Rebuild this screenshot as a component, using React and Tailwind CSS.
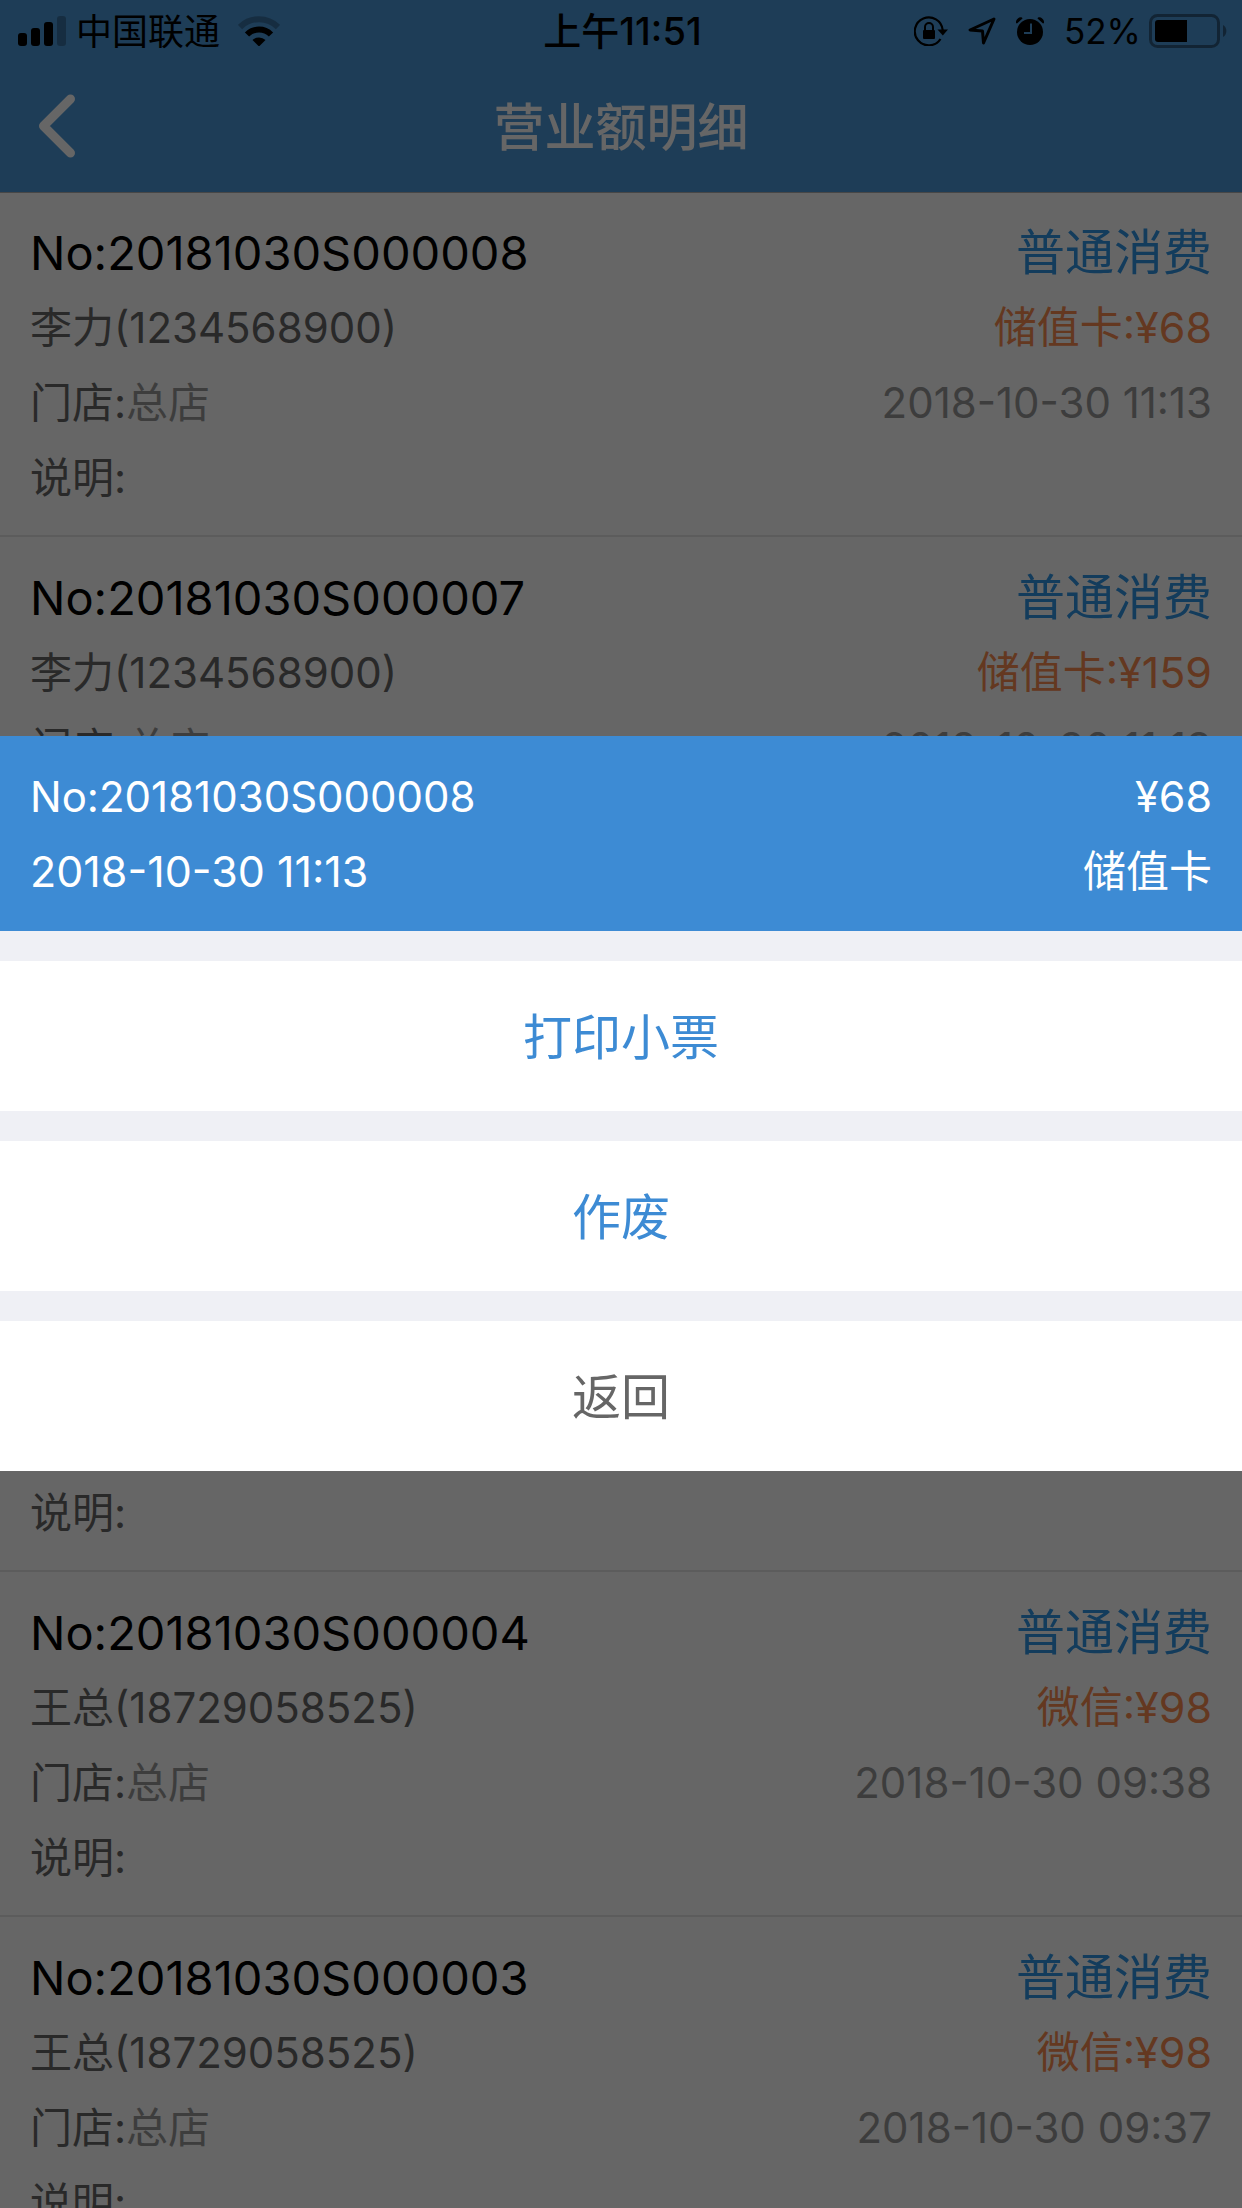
import React from 'react';

const orders = [
    { no: '20181030S000008', type: '普通消费', member: '李力(1234568900)', pay: '储值卡', amount: 68, store: '总店', time: '2018-10-30 11:13' },
    { no: '20181030S000007', type: '普通消费', member: '李力(1234568900)', pay: '储值卡', amount: 159, store: '总店', time: '2018-10-30 11:13' },
    { no: '20181030S000006', type: '普通消费', member: '李力(1234568900)', pay: '储值卡', amount: 98, store: '总店', time: '2018-10-30 10:02' },
    { no: '20181030S000005', type: '普通消费', member: '王总(18729058525)', pay: '微信', amount: 98, store: '总店', time: '2018-10-30 09:40' },
    { no: '20181030S000004', type: '普通消费', member: '王总(18729058525)', pay: '微信', amount: 98, store: '总店', time: '2018-10-30 09:38' },
    { no: '20181030S000003', type: '普通消费', member: '王总(18729058525)', pay: '微信', amount: 98, store: '总店', time: '2018-10-30 09:37' },
];

const SignalIcon = () => (
    <svg className="w-12 h-[30px]" viewBox="0 0 48 30" aria-hidden="true">
        <rect x="0" y="17" width="9" height="13" rx="3" />
        <rect x="13" y="12" width="9" height="18" rx="3" />
        <rect x="26" y="6" width="9" height="24" rx="3" />
        <rect x="39" y="0" width="9" height="30" rx="3" opacity="0.25" />
    </svg>
);

const WifiIcon = () => (
    <svg className="w-[42px] h-[30px]" viewBox="0 0 42 30" aria-hidden="true">
        <path d="M2 11 A27 27 0 0 1 40 11" fill="none" stroke="black" strokeWidth="6" opacity="0.25" />
        <path d="M9 18.5 A17 17 0 0 1 33 18.5" fill="none" stroke="black" strokeWidth="6" />
        <path d="M14.5 24 A9.5 9.5 0 0 1 27.5 24 L21 30.5 Z" />
    </svg>
);

const RotationLockIcon = () => (
    <svg className="w-[34px] h-[30px]" viewBox="0 0 34 30" aria-hidden="true">
        <path d="M26.5 23 A14 14 0 1 1 28.7 14" fill="none" stroke="black" strokeWidth="2.2" />
        <path d="M23.5 13.5 H34 L28.8 19.5 Z" />
        <rect x="9" y="14" width="12" height="9" rx="1" />
        <path d="M11 15 V11 A4 4 0 0 1 19 11 V15" fill="none" stroke="black" strokeWidth="2" />
    </svg>
);

const LocationIcon = () => (
    <svg className="w-7 h-7" viewBox="0 0 28 28" aria-hidden="true">
        <path d="M26 2 L2 13 L14.5 14 L15.5 26 Z" fill="none" stroke="black" strokeWidth="3" strokeLinejoin="round" />
    </svg>
);

const AlarmIcon = () => (
    <svg className="w-7 h-7" viewBox="0 0 28 28" aria-hidden="true">
        <circle cx="14" cy="15" r="13" />
        <path d="M0 6 A5 5 0 0 1 6 0.5 L6.5 1.5 L1 6.5 Z M28 6 A5 5 0 0 0 22 0.5 L21.5 1.5 L27 6.5 Z" />
        <path d="M15 6.5 V16 H8" fill="none" stroke="#4b98d9" strokeWidth="2" />
    </svg>
);

const BatteryIcon = () => (
    <svg className="w-[78px] h-[34px]" viewBox="0 0 78 34" aria-hidden="true">
        <rect x="1.5" y="1.5" width="68" height="31" rx="7" fill="none" stroke="black" strokeWidth="3" opacity="0.4" />
        <path d="M74 11 A7 7 0 0 1 74 23 Z" opacity="0.4" />
        <path d="M9 6 H38 V28 H9 A3 3 0 0 1 6 25 V9 A3 3 0 0 1 9 6 Z" />
    </svg>
);

const StatusBar = () => (
    <div className="grid grid-cols-[1fr_auto_1fr] items-center h-[60px] pl-[18px] pr-[15px] text-[36px] leading-[60px] text-black">
        <div className="flex items-center gap-2.5">
            <SignalIcon />
            <span className="pt-0.5">中国联通</span>
            <span className="pl-2"><WifiIcon /></span>
        </div>
        <span className="text-[38px] font-medium">上午11:51</span>
        <div className="flex items-center justify-end gap-5">
            <RotationLockIcon />
            <LocationIcon />
            <AlarmIcon />
            <div className="flex items-center gap-2">
                <span className="text-[35px]">52%</span>
                <BatteryIcon />
            </div>
        </div>
    </div>
);

const NavBar = () => (
    <div className="grid grid-cols-[1fr_auto_1fr] items-center h-[132px] px-[35px]">
        <button type="button" aria-label="返回" className="w-11 h-[66px]">
            <svg className="w-11 h-[66px]" viewBox="0 0 44 66" fill="none" stroke="white" strokeWidth="9" strokeLinecap="round" strokeLinejoin="round">
                <path d="M35.5 6 L8.5 33 L35.5 60" />
            </svg>
        </button>
        <h1 className="pt-1 text-[51px] font-medium text-white">营业额明细</h1>
    </div>
);

const OrderRow = ({ order }) => (
    <li className="border-b-2 border-[#e6e6e6] px-[30px] pt-[23px] pb-5 text-[42px] leading-[75px] text-[#666]">
        <div className="flex justify-between">
            <span className="text-[47px] text-black">No:{order.no}</span>
            <span className="text-[49px] text-[#3096e6]">{order.type}</span>
        </div>
        <div className="flex justify-between">
            <span>{order.member}</span>
            <span className="text-[43px] text-[#fa8c50]">{order.pay}:¥{order.amount}</span>
        </div>
        <div className="flex justify-between">
            <span>门店:<span className="text-[#999]">{order.store}</span></span>
            <span className="text-[#999]">{order.time}</span>
        </div>
        <div>说明:</div>
    </li>
);

const ActionSheet = ({ order }) => (
    <div className="fixed inset-0 flex flex-col justify-center pb-px bg-black/60">
        <div role="dialog" aria-label="订单操作" className="flex flex-col gap-[30px] bg-[#eff0f5] text-[49px]">
            <div className="bg-[#3d8bd4] px-[30px] pt-[23px] pb-[22px] text-[43px] leading-[75px] text-white">
                <div className="flex justify-between">
                    <span className="text-[42px]">No:{order.no}</span>
                    <span>¥{order.amount}</span>
                </div>
                <div className="flex justify-between">
                    <span>{order.time}</span>
                    <span>{order.pay}</span>
                </div>
            </div>
            <button type="button" className="h-[150px] pt-1 bg-white text-[#3d8bd4]">打印小票</button>
            <button type="button" className="h-[150px] pt-1 bg-white text-[#3d8bd4]">作废</button>
            <button type="button" className="h-[150px] pt-1 bg-white text-[#666]">返回</button>
        </div>
    </div>
);

const App = () => {
    return (
        <div className="h-screen overflow-hidden bg-white font-['Inter','Noto_Sans_CJK_SC',sans-serif]">
            <header className="relative bg-[#4b98d9] shadow-[0_1px_0_#b2b2b2]">
                <StatusBar />
                <NavBar />
            </header>
            <ul>
                {orders.map((order) => (
                    <OrderRow key={order.no} order={order} />
                ))}
            </ul>
            <ActionSheet order={orders[0]} />
        </div>
    );
};

export default App;
